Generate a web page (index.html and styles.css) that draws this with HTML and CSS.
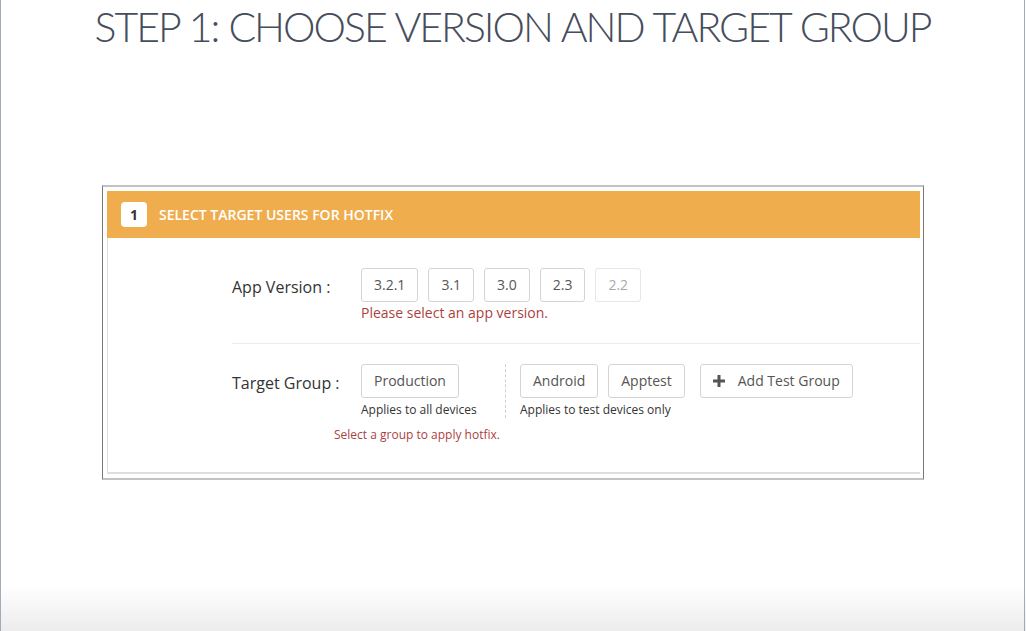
FILE: index.html
```html
<!DOCTYPE html>
<html>
<head>
<meta charset="utf-8">
<link rel="stylesheet" href="styles.css">
</head>
<body>
<div class="page">
  <h1 class="title">STEP 1: CHOOSE VERSION AND TARGET GROUP</h1>
  <div class="frame">
    <div class="panel">
      <div class="panel-head">
        <span class="badge">1</span>
        <span class="head-text">SELECT TARGET USERS FOR HOTFIX</span>
      </div>
      <div class="panel-body">
        <div class="row">
          <div class="label">App Version :</div>
          <div class="controls">
            <div class="btns">
              <button class="btn">3.2.1</button>
              <button class="btn">3.1</button>
              <button class="btn">3.0</button>
              <button class="btn">2.3</button>
              <button class="btn disabled">2.2</button>
            </div>
            <div class="error">Please select an app version.</div>
          </div>
        </div>
        <div class="sep"></div>
        <div class="row">
          <div class="label">Target Group :</div>
          <div class="controls groups">
            <div class="group prod">
              <div class="btns"><button class="btn">Production</button></div>
              <div class="hint">Applies to all devices</div>
            </div>
            <div class="group test">
              <div class="btns">
                <button class="btn">Android</button>
                <button class="btn">Apptest</button>
                <button class="btn add"><svg class="plus" width="12" height="12" viewBox="0 0 12 12"><path d="M4.5 0h3v4.5H12v3H7.5V12h-3V7.5H0v-3h4.5z" fill="#555"/></svg>Add Test Group</button>
              </div>
              <div class="hint">Applies to test devices only</div>
            </div>
          </div>
        </div>
        <div class="error small group-error">Select a group to apply hotfix.</div>
      </div>
    </div>
  </div>
</div>
</body>
</html>
```
FILE: styles.css
```css
html, body {
  margin: 0;
  padding: 0;
  height: 100%;
}
body {
  background: linear-gradient(to bottom, #ffffff 0, #ffffff 585px, #ececec 631px);
  font-family: "Open Sans", "Liberation Sans", sans-serif;
}
.page {
  width: 1025px;
  height: 631px;
  box-sizing: border-box;
  border-left: 1px solid #a4abb8;
  border-right: 1px solid #a4abb8;
  overflow: hidden;
}
.title {
  margin: 0;
  padding-top: 5px;
  height: 185px;
  box-sizing: border-box;
  text-align: center;
  font-family: "Lato", sans-serif;
  font-weight: 300;
  font-size: 41px;
  line-height: 44px;
  letter-spacing: -2px;
  word-spacing: 1px;
  color: #464d5c;
}
.frame {
  margin-left: 101px;
  width: 822px;
  box-sizing: border-box;
  border-left: 1px solid #777;
  border-right: 1px solid #777;
  border-top: 2px solid #c2c2c2;
  border-bottom: 2px solid #c2c2c2;
  padding: 4px 3px 4px 4px;
}
.panel {
  border-left: 1px solid #dedede;
  border-bottom: 2px solid #dedede;
  background: #fff;
}
.panel-head {
  background: #efad4e;
  height: 47px;
  display: flex;
  align-items: center;
  padding-left: 14px;
  margin-left: -1px;
}
.badge {
  width: 26px;
  height: 25px;
  background: #fff;
  border-radius: 4px;
  display: flex;
  align-items: center;
  justify-content: center;
  font-weight: 700;
  font-size: 14px;
  color: #333;
}
.head-text {
  margin-left: 12px;
  color: #fff;
  font-weight: 600;
  font-size: 14px;
}
.panel-body {
  padding: 30px 0 29px 0;
}
.row {
  display: flex;
  padding-left: 124px;
}
.label {
  width: 129px;
  height: 34px;
  padding-top: 3px;
  box-sizing: border-box;
  display: flex;
  align-items: center;
  font-size: 16px;
  color: #333;
}
.btns {
  display: flex;
  gap: 10px;
}
.btn {
  font-family: "Open Sans", "Liberation Sans", sans-serif;
  font-size: 14px;
  line-height: 20px;
  color: #555;
  background: #fff;
  border: 1px solid #d4d4d4;
  border-radius: 3px;
  padding: 6px 12px;
  margin: 0;
  display: flex;
  align-items: center;
}
.btn.disabled {
  color: #aaa;
  border-color: #e6e6e6;
}
.btn.add {
  margin-left: 5px;
}
.plus {
  margin-right: 13px;
}
.error {
  color: #ac3f3f;
  font-size: 14px;
  line-height: 20px;
  margin-top: 1px;
}
.sep {
  margin: 20px 0 20px 124px;
  border-top: 1px solid #ececec;
}
.groups {
  display: flex;
}
.group.prod {
  width: 144px;
}
.group.test {
  border-left: 1px dashed #cfcfcf;
  padding-left: 14px;
}
.hint {
  font-size: 12px;
  line-height: 17px;
  margin-top: 3px;
  color: #333;
}
.error.small {
  font-size: 12px;
  line-height: 17px;
}
.group-error {
  padding-left: 226px;
  margin-top: 8px;
}
```
